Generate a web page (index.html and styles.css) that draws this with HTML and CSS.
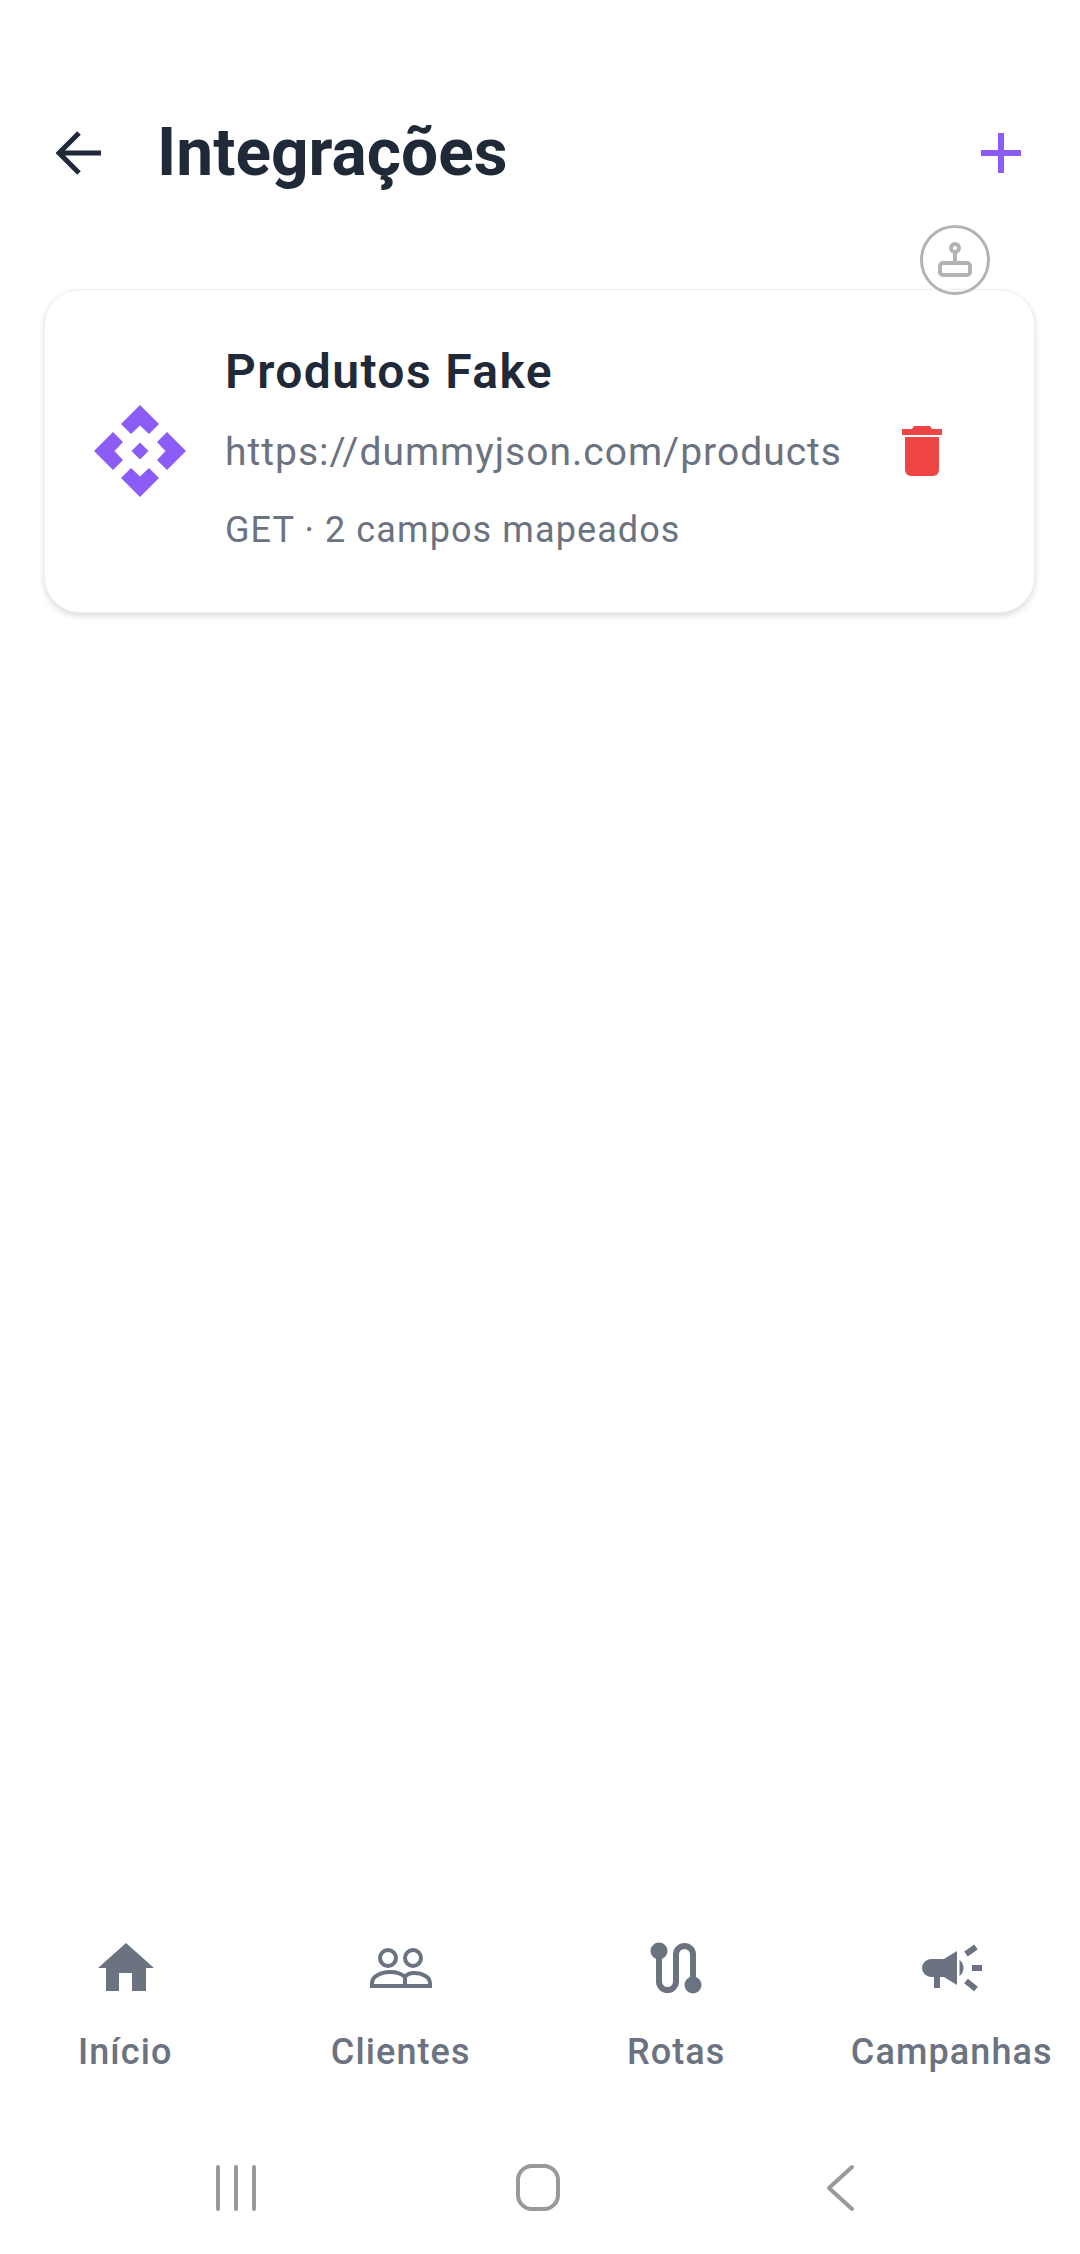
FILE: index.html
```html
<!DOCTYPE html>
<html lang="pt-BR">
<head>
  <meta charset="UTF-8">
  <meta name="viewport" content="width=device-width, initial-scale=1.0">
  <title>Integrações</title>
  <link rel="stylesheet" href="styles.css">
</head>
<body>
  <div class="page">
    <header class="topbar">
      <svg class="back-icon" viewBox="0 0 46 46" aria-hidden="true">
        <path d="M45 23H4M23 3L3 23l20 20"/>
      </svg>
      <h1 class="topbar-title">Integrações</h1>
      <svg class="add-icon" viewBox="0 0 40 40" aria-hidden="true">
        <path d="M20 0v40M0 20h40"/>
      </svg>
    </header>

    <main class="list">
      <!-- floating joystick button, sits over the card edge -->
      <div class="float-btn">
        <svg viewBox="0 0 40 40" aria-hidden="true">
          <circle cx="20" cy="8" r="4"/>
          <path d="M20 12v11"/>
          <rect x="5" y="23" width="30" height="12" rx="3"/>
        </svg>
      </div>

      <article class="card">
        <svg class="card-logo" viewBox="-47 -47 94 94" aria-hidden="true">
          <path id="petal" d="M0-46L19-27 9-17 0-25.500-9-17-19-27z"/>
          <use href="#petal" transform="rotate(90)"/>
          <use href="#petal" transform="rotate(180)"/>
          <use href="#petal" transform="rotate(270)"/>
          <path d="M0-8.500L8.500 0 0 8.500-8.500 0z"/>
        </svg>
        <div class="card-body">
          <div class="card-title">Produtos Fake</div>
          <div class="card-url">https://dummyjson.com/products</div>
          <div class="card-meta">GET · 2 campos mapeados</div>
        </div>
        <svg class="trash-icon" viewBox="0 0 40 52" aria-hidden="true">
          <path d="M0 4h10l2-3h16l2 3h10v6H0z"/>
          <path d="M3 12h34v33a6 6 0 0 1-6 6H9a6 6 0 0 1-6-6z"/>
        </svg>
      </article>
    </main>

    <nav class="tabs">
      <div class="tab">
        <svg viewBox="-1 0 80 60" aria-hidden="true">
          <path d="M40 4L68 29H60V52H46V34H33V52H20V29H12z"/>
        </svg>
        <span>Início</span>
      </div>
      <div class="tab">
        <svg viewBox="0 0 80 60" aria-hidden="true">
          <g class="line" stroke-width="4">
            <circle cx="27" cy="19" r="8"/>
            <circle cx="52" cy="19" r="8"/>
            <path d="M11 47H69V44C69 38 61 34 53 34 49 34 46 35 44 38 41 35 36 33 29 33 19 33 11 38 11 44zM44 38V47"/>
          </g>
        </svg>
        <span>Clientes</span>
      </div>
      <div class="tab">
        <svg viewBox="0 0 80 60" aria-hidden="true">
          <path class="line" stroke-width="6" d="M23 12V42.500a8.500 8.500 0 0 0 17 0V15.500a8.500 8.500 0 0 1 17 0V46"/>
          <circle cx="23" cy="12" r="8.500"/>
          <circle cx="57" cy="46" r="8.500"/>
        </svg>
        <span>Rotas</span>
      </div>
      <div class="tab">
        <svg viewBox="-2 0 80 60" aria-hidden="true">
          <path d="M17 20H30L43 12V46L30 38H26V49H20V38H17a9 9 0 0 1 0-18z"/>
          <path d="M45.500 21a10 10 0 0 1 0 16z"/>
          <path class="line" stroke-width="6" d="M58 29H68M52 15L62 8M52 42L62 50"/>
        </svg>
        <span>Campanhas</span>
      </div>
    </nav>

    <div class="sysnav">
      <svg viewBox="0 0 60 60" aria-hidden="true">
        <path d="M12 9v42M30 9v42M48 9v42"/>
      </svg>
      <svg viewBox="0 0 60 60" aria-hidden="true">
        <rect x="10" y="8" width="40" height="43" rx="14"/>
      </svg>
      <svg viewBox="0 0 60 60" aria-hidden="true">
        <path d="M42 9L19 30l23 21"/>
      </svg>
    </div>
  </div>
</body>
</html>
```

FILE: styles.css
```css
* {
  box-sizing: border-box;
}
body {
  margin: 0;
  background: #fff;
  font-family: Roboto, "Liberation Sans", sans-serif;
}
.page {
  display: flex;
  flex-direction: column;
  height: 2254px;
  overflow: hidden;
}

/* top bar */
.topbar {
  display: flex;
  align-items: center;
  height: 106px;
  margin-top: 100px;
  padding: 0 59px 0 56px;
}
.back-icon {
  width: 46px;
  height: 46px;
  fill: none;
  stroke: #1f2937;
  stroke-width: 5;
}
.topbar-title {
  flex: 1;
  margin: 0 0 0 55px;
  font-size: 65.800px;
  font-weight: 700;
  line-height: 1;
  color: #1f2937;
}
.add-icon {
  width: 40px;
  height: 40px;
  fill: none;
  stroke: #8b5cf6;
  stroke-width: 6;
}

/* integrations list */
.list {
  position: relative;
  flex: 1;
  padding: 83px 45px 0 44px;
}
.float-btn {
  position: absolute;
  top: 19px;
  right: 90px;
  z-index: 2;
  display: flex;
  align-items: center;
  justify-content: center;
  width: 70px;
  height: 70px;
  border: 3px solid #b3b3b3;
  border-radius: 50%;
}
.float-btn svg {
  width: 40px;
  height: 40px;
  fill: none;
  stroke: #b3b3b3;
  stroke-width: 4;
}
.card {
  display: flex;
  align-items: center;
  height: 324px;
  padding: 0 92px 0 48px;
  background: #fff;
  border: 1px solid #f0f0f0;
  border-radius: 36px;
  box-shadow: 0 3px 6px rgba(0, 0, 0, 0.14);
}
.card-logo {
  flex: none;
  width: 94px;
  height: 94px;
  fill: #8b5cf6;
}
.card-body {
  flex: 1;
  margin-left: 38px;
  padding-bottom: 8px;
}
.card-title {
  font-size: 48px;
  font-weight: 600;
  line-height: 56px;
  letter-spacing: 1.4px;
  color: #1f2937;
}
.card-url {
  margin-top: 29px;
  font-size: 39px;
  line-height: 46px;
  letter-spacing: 1px;
  color: #6b7280;
}
.card-meta {
  margin-top: 34px;
  font-size: 36px;
  line-height: 42px;
  letter-spacing: 1.1px;
  color: #6b7280;
}
.trash-icon {
  flex: none;
  width: 40px;
  height: 52px;
  fill: #ef4444;
}

/* bottom tabs */
.tabs {
  display: grid;
  grid-template-columns: repeat(4, 275.500px);
  justify-content: center;
  padding: 0 3px 67px 0;
}
.tab {
  display: flex;
  flex-direction: column;
  align-items: center;
  gap: 32px;
  font-size: 36px;
  font-weight: 500;
  line-height: 42px;
  letter-spacing: 1.1px;
  white-space: nowrap;
  color: #6b7280;
}
.tab svg {
  width: 80px;
  height: 60px;
  fill: #6b7280;
}
.tab .line {
  fill: none;
  stroke: #6b7280;
  stroke-linecap: butt;
}

/* android navigation bar */
.sysnav {
  display: flex;
  justify-content: center;
  gap: 242px;
  height: 114px;
  padding: 18px 4px 0 0;
}
.sysnav svg {
  width: 60px;
  height: 60px;
  fill: none;
  stroke: #999;
  stroke-width: 4;
  stroke-linecap: round;
  stroke-linejoin: round;
}
```
